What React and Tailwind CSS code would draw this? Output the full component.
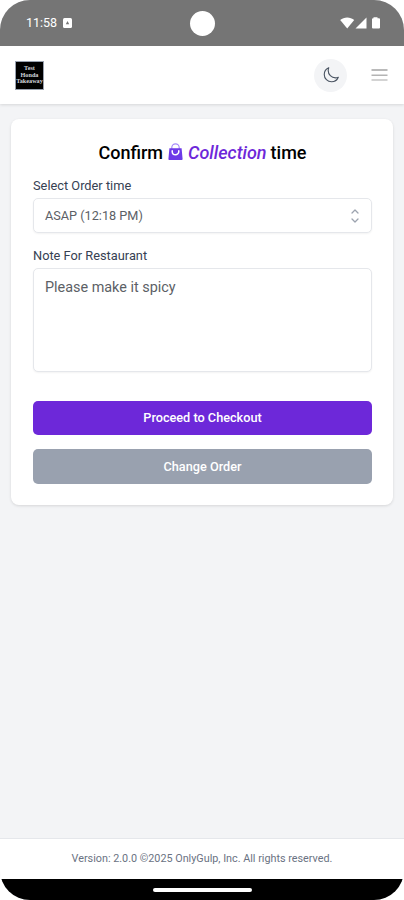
import React, { useState } from 'react';

const StatusBar = () => (
  <div className="relative h-[46px] shrink-0 bg-[#757575] text-white flex items-center justify-between pl-[26px] pr-[22px]">
    <div className="flex items-center gap-[6px]">
      <span className="text-[12.5px] leading-4 font-normal">11:58</span>
      <svg width="9" height="10" viewBox="0 0 9 10">
        <rect width="9" height="10" rx="1.5" fill="#fff" />
        <path d="M4.5 3L6.2 6.2H2.8Z" fill="#757575" />
      </svg>
    </div>
    {/* Camera cutout */}
    <div className="absolute left-[190px] top-[11px] w-[25px] h-[25px] rounded-full bg-white" />
    <div className="flex items-center">
      <svg width="42" height="12" viewBox="0 0 42 12" fill="#fff">
        <path d="M0.2 3C4 -0.4 10.4 -0.4 14.2 3L7.2 11.6Z" />
        <path d="M26.5 0.5V11.5H15.5Z" />
        <path d="M33.5 0.2H37.5V1.3H39a1 1 0 0 1 1 1V10.5a1 1 0 0 1-1 1H33a1 1 0 0 1-1-1V2.3a1 1 0 0 1 1-1H33.5Z" />
      </svg>
    </div>
  </div>
);

const Header = () => (
  <header className="h-[58px] shrink-0 bg-white shadow-[0_1px_3px_rgba(0,0,0,0.12)] flex items-center justify-between pl-[15px] pr-4">
    <div className="w-[29px] h-[29px] bg-black border border-gray-400 text-gray-300 font-['Liberation_Serif',serif] text-[6.2px] leading-[6.5px] font-bold text-center flex flex-col items-center justify-center overflow-hidden">
      <span>Test</span>
      <span>Honda</span>
      <span>Takeaway</span>
    </div>
    <div className="flex items-center gap-6">
      <button className="w-[33px] h-[33px] rounded-full bg-gray-100 flex items-center justify-center">
        <svg width="18" height="18" viewBox="0 0 24 24" fill="none" stroke="#4b5563" strokeWidth="1.5" strokeLinecap="round" strokeLinejoin="round">
          <path d="M21.752 15.002A9.72 9.72 0 0 1 18 15.75c-5.385 0-9.75-4.365-9.75-9.75 0-1.33.266-2.597.748-3.752A9.753 9.753 0 0 0 3 11.25C3 16.635 7.365 21 12.75 21a9.753 9.753 0 0 0 9.002-5.998Z" />
        </svg>
      </button>
      <button>
        <svg width="17" height="12" viewBox="0 0 17 12">
          <path d="M0.5 1H16.5" stroke="#a3a3a3" strokeWidth="1.4" />
          <path d="M0.5 6.2H16.5" stroke="#b4b4b4" strokeWidth="1.4" />
          <path d="M0.5 11H16.5" stroke="#c4c4c4" strokeWidth="1.6" />
        </svg>
      </button>
    </div>
  </header>
);

const BagIcon = () => (
  <svg width="15" height="18" viewBox="0 0 15 18" className="relative -top-px mx-[5px]">
    <path d="M3.8 6V4.6a3.7 3.7 0 0 1 7.4 0V6" fill="none" stroke="#a78bfa" strokeWidth="1.2" />
    <path d="M1.4 5.2H13.6L14.6 16a1 1 0 0 1-1 1.1H1.4a1 1 0 0 1-1-1.1Z" fill="#6d3ae8" />
    <path d="M4.2 7.8v.6a3.3 3.3 0 0 0 6.6 0v-.6" fill="none" stroke="#fff" strokeWidth="1.5" strokeLinecap="round" />
  </svg>
);

const App = () => {
  const [note, setNote] = useState('Please make it spicy');

  return (
    <div className="h-[900px] w-[404px] bg-white font-[Roboto,'Liberation_Sans',sans-serif]">
      <div className="h-full rounded-[30px] overflow-hidden flex flex-col bg-gray-100">
        <StatusBar />
        <Header />

        <main className="flex-1 pt-[15px] pl-[11px] pr-[11px]">
          <div className="h-[386px] bg-white rounded-lg shadow-[0_1px_3px_rgba(0,0,0,0.12)] pl-[22px] pr-[21px] pt-[23px]">
            <h1 className="h-[22px] flex items-center justify-center text-[18px] leading-[22px] font-medium text-black">
              <span>Confirm</span>
              <BagIcon />
              <span className="italic text-[#6d28d9] mr-1">Collection</span>
              <span>time</span>
            </h1>

            <label className="block mt-[13px] text-[12.8px] leading-[18px] text-gray-700">Select Order time</label>
            <button className="mt-[3px] w-full h-[35px] rounded-[5px] border border-gray-200 shadow-xs bg-white pl-[11px] pr-[11px] flex items-center justify-between text-[12.7px] text-[#5c5f66]">
              <span>ASAP (12:18 PM)</span>
              <svg width="10" height="14" viewBox="0 0 10 14" fill="none" stroke="#9ca3af" strokeWidth="1.3" strokeLinecap="round" strokeLinejoin="round">
                <path d="M2 4L5 1L8 4" />
                <path d="M2 10L5 13L8 10" />
              </svg>
            </button>

            <label className="block mt-[14px] text-[12.8px] leading-[18px] text-gray-700">Note For Restaurant</label>
            <textarea
              value={note}
              onChange={(e) => setNote(e.target.value)}
              className="block mt-[3px] w-full h-[104px] resize-none rounded-[5px] border border-gray-200 shadow-xs bg-white px-[11px] py-[9px] text-[14.4px] leading-5 text-[#5c5f66] outline-none"
            />

            <button className="block mt-[29px] w-full h-[34px] rounded-[5px] bg-[#6d28d9] text-white text-[12.7px] font-medium">
              Proceed to Checkout
            </button>
            <button className="block mt-[14px] w-full h-[35px] rounded-[5px] bg-gray-400 text-white text-[12.7px] font-medium">
              Change Order
            </button>
          </div>
        </main>

        <footer className="h-[41px] shrink-0 bg-white border-t border-gray-200 flex items-center justify-center text-[10.8px] text-gray-500">
          Version: 2.0.0 ©2025 OnlyGulp, Inc. All rights reserved.
        </footer>
        <div className="h-[21px] shrink-0 bg-black flex items-center justify-center">
          <div className="w-[99px] h-1 rounded-full bg-white" />
        </div>
      </div>
    </div>
  );
};

export default App;
